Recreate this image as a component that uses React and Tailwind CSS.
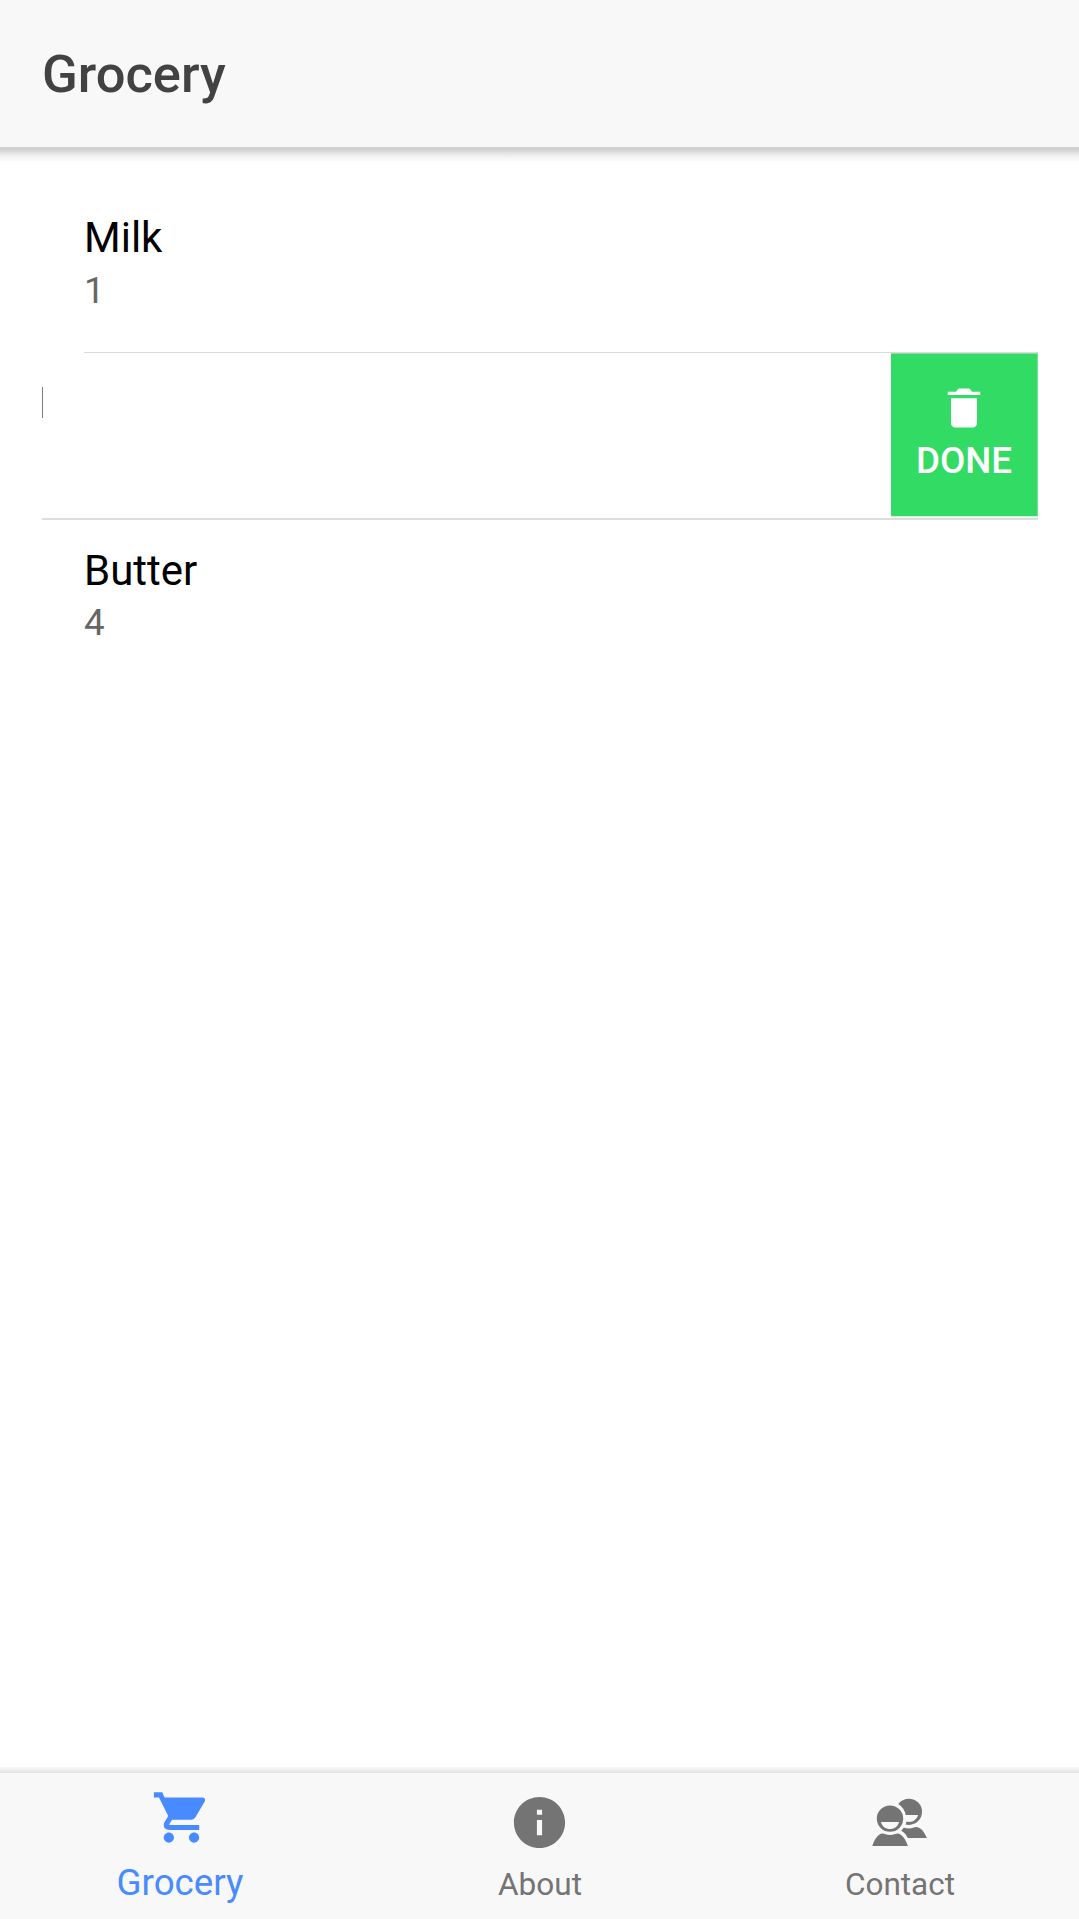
import { IoMdCart, IoMdInformationCircle, IoMdTrash } from "react-icons/io";

function ContactsIcon({ className }) {
  return (
    <svg className={className} viewBox="0 0 63 63" fill="currentColor">
      <path d="M4.3 55C6.3 49.2 9.7 43.3 13.9 42.6C16 42.3 18 44 22 44S28 42.3 30.1 42.6C34.3 43.3 37.9 49.2 39.9 55Z" />
      <path
        fillRule="evenodd"
        d="M22 14.4A13.2 13.2 0 1 1 22 40.8A13.2 13.2 0 1 1 22 14.4ZM12.9 31C14.2 35.4 17.5 38 22 38S29.8 35.4 31.1 31Z"
      />
      <path
        fillRule="evenodd"
        d="M30.3 12.9C32.7 9.8 36.5 7.8 41 7.8A13 13 0 0 1 41 33.9L37.5 33.5C38.1 32.4 38.4 31.4 38.5 30.5L41 30.9C45.5 30.9 48.8 28.4 50.1 24H37.8C36.9 19.4 34.4 15.5 30.3 12.9Z"
      />
      <path d="M33.2 39.8L35.7 36.8C37.5 37.2 39.2 37.4 41 37.4C44.4 37.4 46.6 35.7 48.7 36C53.1 36.6 56.6 41.4 58.8 47H39.9C38.4 44.2 36.6 41.9 33.2 39.8Z" />
    </svg>
  );
}

function Item({ name, quantity, className, gap }) {
  return (
    <div className={`ml-[84px] flex flex-col ${className}`}>
      <h2 className="text-[42px] leading-[50px] text-black">{name}</h2>
      <p className={`text-[36.75px] leading-[44px] text-[#666] ${gap}`}>{quantity}</p>
    </div>
  );
}

function Tab({ icon, label, active }) {
  return (
    <button
      className={`flex flex-1 flex-col items-center ${active ? "pt-[12.5px] text-[#488aff]" : "pt-[18px] text-[#747474]"}`}
    >
      {icon}
      <span
        className={
          active
            ? "mt-[12px] text-[36.75px] leading-[44px]"
            : "mt-[12px] text-[31.5px] leading-[38px]"
        }
      >
        {label}
      </span>
    </button>
  );
}

export default function App() {
  return (
    <div className="flex h-[1919px] w-full flex-col overflow-hidden bg-white font-[Roboto,sans-serif]">
      <header className="flex h-[147px] shrink-0 items-center bg-[#f8f8f8] pt-0.5 pl-[42px]">
        <h1 className="text-[52.5px] leading-[63px] font-medium text-[#424242]">Grocery</h1>
      </header>
      <div className="h-3.5 shrink-0 bg-[linear-gradient(#d2d2d2,#cfcfcf_15%,#e4e4e4_45%,#f3f3f3_70%,#f9f9f9_90%,#f9f9f9)]" />

      <main className="flex-1 pt-[28px]">
        <div className="flex h-[164px] flex-col justify-between">
          <Item name="Milk" quantity="1" className="pt-[24px]" gap="mt-[6px]" />
          <div className="mr-[41px] ml-[84px] h-px bg-[#dadada]" />
        </div>
        <div className="mr-[41px] ml-[42px] flex h-[165px] items-start justify-between">
          <div className="mt-[34px] h-[31px] w-px bg-[#7d7d7d]" />
          <button className="flex h-[164px] w-[147px] flex-col items-center border-t border-r border-b border-t-[#8fdca7] border-r-[#70e693] border-b-[#ccf6d8] bg-[#32db64] pt-[27.5px] text-white">
            <IoMdTrash className="mr-px size-[52px]" />
            <span className="mt-[5px] text-[36.75px] leading-[44px] font-medium">DONE</span>
          </button>
        </div>
        <div className="mr-[41px] ml-[42px] h-0.5 bg-[#dedede]" />
        <Item name="Butter" quantity="4" className="pt-[26px]" gap="mt-[5px]" />
      </main>

      <div className="h-1.5 shrink-0 bg-linear-to-b from-[#fafafa] to-[#e2e2e2]" />
      <nav className="-mr-px flex h-[146px] shrink-0 bg-[#f8f8f8]">
        <Tab active label="Grocery" icon={<IoMdCart className="mr-px size-[63px]" />} />
        <Tab label="About" icon={<IoMdInformationCircle className="mr-px size-[63px]" />} />
        <Tab label="Contact" icon={<ContactsIcon className="mr-px size-[63px]" />} />
      </nav>
    </div>
  );
}
